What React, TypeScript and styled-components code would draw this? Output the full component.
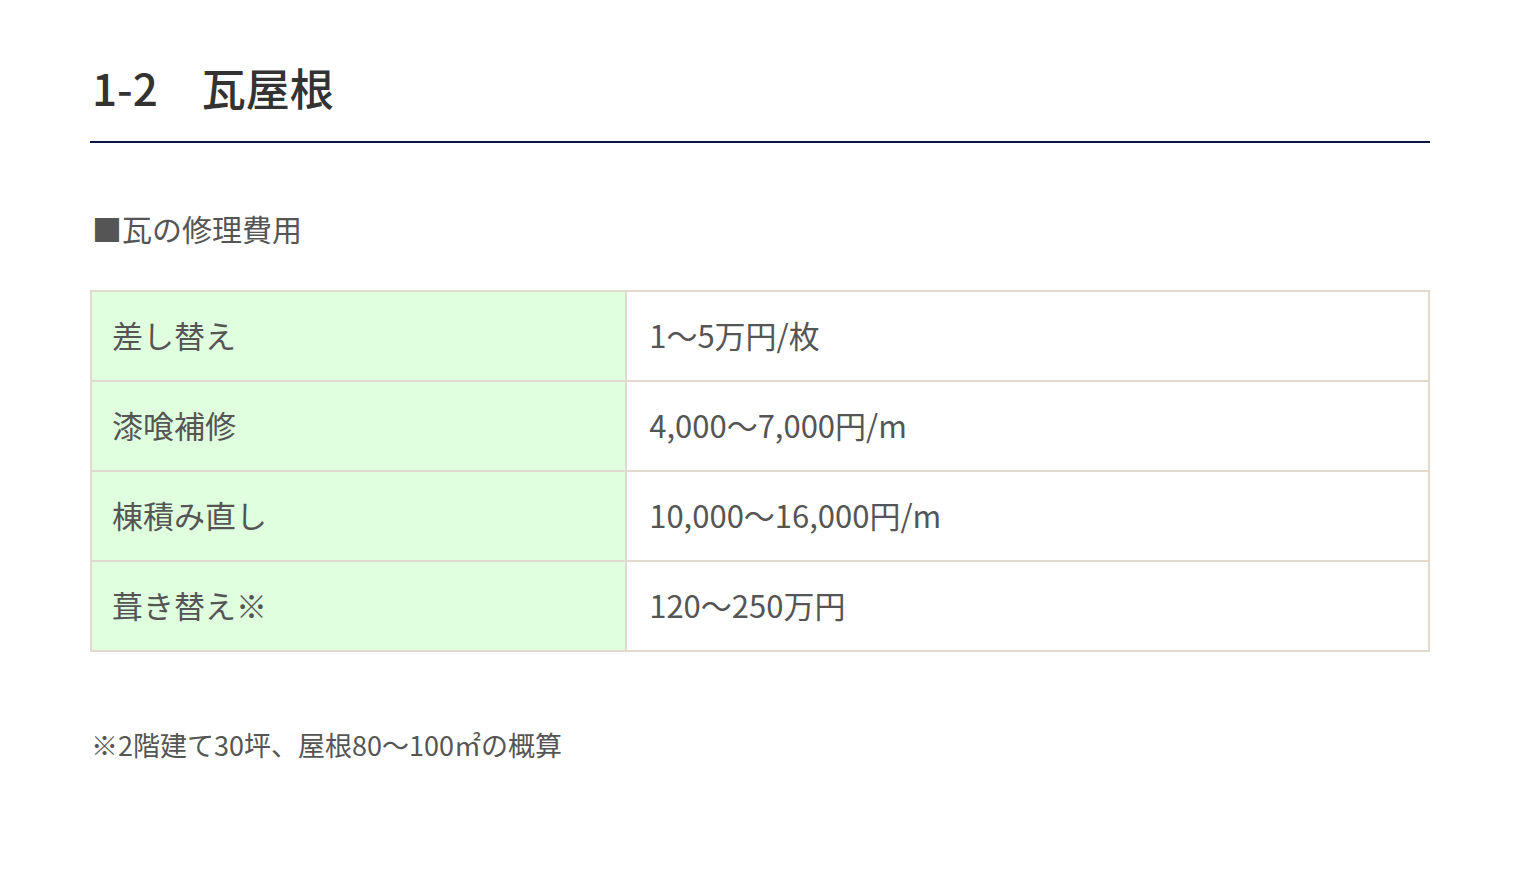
import styled, { createGlobalStyle } from "styled-components";

const GlobalStyle = createGlobalStyle`
  html, body {
    margin: 0;
    padding: 0;
    background: #ffffff;
  }
  body {
    font-family: "Noto Sans CJK JP", "Noto Sans", sans-serif;
    color: #555555;
  }
`;

const Page = styled.main`
  padding: 50px 90px 80px;
`;

const Heading = styled.h2`
  margin: 0;
  padding: 9px 0 25px 2px;
  font-size: 44px;
  line-height: 1.3;
  font-weight: 500;
  color: #333333;
  border-bottom: 2px solid #0b1642;
`;

const SubHeading = styled.h3`
  margin: 63px 0 0 2px;
  font-size: 30px;
  line-height: 1.5;
  font-weight: 400;
  color: #555555;
`;

const PriceTable = styled.table`
  width: 100%;
  margin-top: 39px;
  border-collapse: collapse;
  border: 2px solid #e2dace;
`;

const Row = styled.tr`
  height: 90px;
`;

const Cell = styled.td<{ $head?: boolean }>`
  border: 2px solid #e2dace;
  padding: 0 20px 2px ${(p) => (p.$head ? "20px" : "22px")};
  width: ${(p) => (p.$head ? "40%" : "auto")};
  background: ${(p) => (p.$head ? "#dfffdf" : "#ffffff")};
  font-size: 31px;
  line-height: 1.4;
  color: #555555;
  vertical-align: middle;
`;

const Note = styled.p`
  margin: 73px 0 0 1px;
  font-size: 27px;
  line-height: 1.5;
  color: #555555;
`;

const rows = [
  { item: "差し替え", price: "1〜5万円/枚" },
  { item: "漆喰補修", price: "4,000〜7,000円/m" },
  { item: "棟積み直し", price: "10,000〜16,000円/m" },
  { item: "葺き替え※", price: "120〜250万円" },
];

const App = () => {
  return (
    <>
      <GlobalStyle />
      <Page>
        <Heading>1-2　瓦屋根</Heading>
        <SubHeading>■瓦の修理費用</SubHeading>
        <PriceTable>
          <tbody>
            {rows.map((r) => (
              <Row key={r.item}>
                <Cell $head>{r.item}</Cell>
                <Cell>{r.price}</Cell>
              </Row>
            ))}
          </tbody>
        </PriceTable>
        <Note>※2階建て30坪、屋根80〜100㎡の概算</Note>
      </Page>
    </>
  );
};

export default App;
